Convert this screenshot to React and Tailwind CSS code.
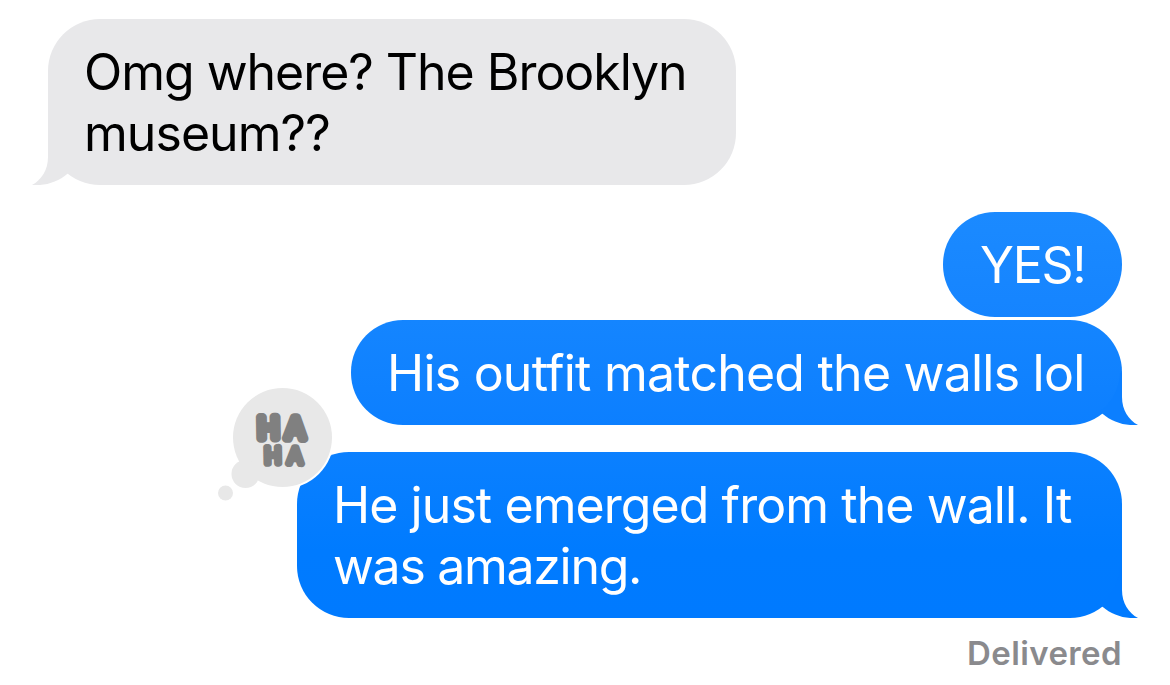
const messages = [
  {
    id: 1,
    lines: [
      { text: "Omg where? The Brooklyn", style: "tracking-[-1.03px]" },
      { text: "museum??", style: "tracking-[-0.95px]" },
    ],
    style: "self-start pl-9 w-[688px] h-[166px] bg-[#e8e8ea] text-black",
    tail: "left",
    tailStyle: "left-[-16px] text-[#e8e8ea]",
  },
  {
    id: 2,
    lines: [{ text: "YES!", style: "tracking-[-1.3px]" }],
    style: "self-end mt-[27px] pl-[37px] w-[179px] h-[105px] bg-linear-to-b from-[#1b8aff] to-[#1584ff] text-white",
  },
  {
    id: 3,
    lines: [{ text: "His outfit matched the walls lol", style: "tracking-[-0.77px]" }],
    style: "self-end mt-[3px] pl-9 w-[771px] h-[105px] bg-linear-to-b from-[#1485ff] to-[#0c7fff] text-white",
    tail: "right",
    tailStyle: "right-[-16px] -scale-x-100 text-[#0c7fff]",
  },
  {
    id: 4,
    lines: [
      { text: "He just emerged from the wall. It", style: "tracking-[-0.93px]" },
      { text: "was amazing.", style: "tracking-[-1.3px]" },
    ],
    style: "self-end mt-[27px] pl-9 w-[825px] h-[166px] bg-linear-to-b from-[#0b80ff] via-[#007bff] via-60% to-[#007aff] text-white",
    tail: "right",
    tailStyle: "right-[-16px] -scale-x-100 text-[#007aff]",
    reaction: true,
  },
]

const Tail = function ({ className }) {
  return (
    <svg className={`absolute bottom-0 w-[40px] h-[64px] ${className}`} viewBox="0 -40 40 64" fill="currentColor">
      <path d="M16 -28V-4C16 9 9.5 19 0 24C13 25 26 21 35.5 12.7L38 10.5A52 52 0 0 1 18 -28Z" />
    </svg>
  )
}

const Reaction = function () {
  return (
    <svg className="absolute left-[-82px] top-[-68px] w-[120px] h-[120px]" viewBox="0 0 120 120">
      <circle cx="67.5" cy="53.5" r="51.5" fill="#fff" />
      <g fill="#e8e8e8">
        <circle cx="67.5" cy="53.5" r="49.5" />
        <circle cx="30.5" cy="90" r="14" />
        <circle cx="10.5" cy="109" r="7.5" />
      </g>
      <g
        className="font-['Inter',sans-serif] font-light"
        fill="#808080"
        stroke="#808080"
        strokeLinejoin="round"
      >
        <text x="43 70.5" y="54.3" rotate="-1 1" fontSize="28.5" strokeWidth="9">HA</text>
        <text x="49.8 72.5" y="79.6" rotate="-1 1" fontSize="22" strokeWidth="6.8">HA</text>
      </g>
    </svg>
  )
}

const Bubble = function ({ message }) {
  return (
    <div className={`relative rounded-[52px] pt-[23px] ${message.style}`}>
      {message.lines.map((line) => (
        <p key={line.text} className={`whitespace-nowrap ${line.style}`}>{line.text}</p>
      ))}
      {message.tail && <Tail className={message.tailStyle} />}
      {message.reaction && <Reaction />}
    </div>
  )
}

export default function App() {
  return (
    <div className="flex flex-col w-[1170px] h-[685px] overflow-hidden bg-white pt-[19px] pl-12 pr-12 font-['Inter',sans-serif] text-[50px] leading-[61px]">
      {messages.map((message) => (
        <Bubble key={message.id} message={message} />
      ))}
      {/* Status */}
      <div className="self-end mt-[15px] text-[33px] leading-[40px] font-semibold tracking-[0.4px] text-[#8a8a8d]">Delivered</div>
    </div>
  )
}
